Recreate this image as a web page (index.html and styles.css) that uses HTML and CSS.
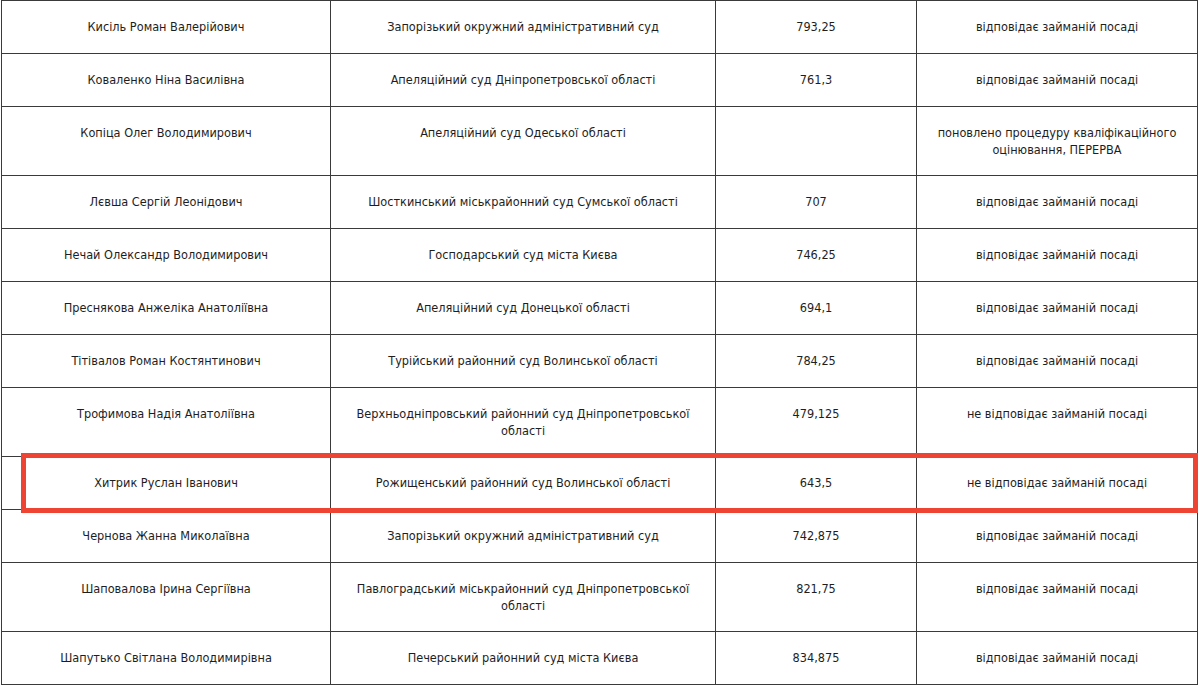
FILE: index.html
```html
<!DOCTYPE html>
<html lang="uk">
<head>
<meta charset="utf-8">
<title>Результати</title>
<link rel="stylesheet" href="styles.css">
</head>
<body>
<div class="wrap">
<table class="grid">
<colgroup>
<col class="c1"><col class="c2"><col class="c3"><col class="c4">
</colgroup>
<tbody>
<tr class="r1"><td>Кисіль Роман Валерійович</td><td>Запорізький окружний адміністративний суд</td><td>793,25</td><td>відповідає займаній посаді</td></tr>
<tr class="r1"><td>Коваленко Ніна Василівна</td><td>Апеляційний суд Дніпропетровської області</td><td>761,3</td><td>відповідає займаній посаді</td></tr>
<tr class="r2"><td>Копіца Олег Володимирович</td><td>Апеляційний суд Одеської області</td><td></td><td>поновлено процедуру кваліфікаційного оцінювання, ПЕРЕРВА</td></tr>
<tr class="r1"><td>Лєвша Сергій Леонідович</td><td>Шосткинський міськрайонний суд Сумської області</td><td>707</td><td>відповідає займаній посаді</td></tr>
<tr class="r1"><td>Нечай Олександр Володимирович</td><td>Господарський суд міста Києва</td><td>746,25</td><td>відповідає займаній посаді</td></tr>
<tr class="r1"><td>Преснякова Анжеліка Анатоліївна</td><td>Апеляційний суд Донецької області</td><td>694,1</td><td>відповідає займаній посаді</td></tr>
<tr class="r1"><td>Тітівалов Роман Костянтинович</td><td>Турійський районний суд Волинської області</td><td>784,25</td><td>відповідає займаній посаді</td></tr>
<tr class="r2"><td>Трофимова Надія Анатоліївна</td><td>Верхньодніпровський районний суд Дніпропетровської області</td><td>479,125</td><td>не відповідає займаній посаді</td></tr>
<tr class="r1"><td>Хитрик Руслан Іванович</td><td>Рожищенський районний суд Волинської області</td><td>643,5</td><td>не відповідає займаній посаді</td></tr>
<tr class="r1"><td>Чернова Жанна Миколаївна</td><td>Запорізький окружний адміністративний суд</td><td>742,875</td><td>відповідає займаній посаді</td></tr>
<tr class="r2"><td>Шаповалова Ірина Сергіївна</td><td>Павлоградський міськрайонний суд Дніпропетровської області</td><td>821,75</td><td>відповідає займаній посаді</td></tr>
<tr class="r1"><td>Шапутько Світлана Володимирівна</td><td>Печерський районний суд міста Києва</td><td>834,875</td><td>відповідає займаній посаді</td></tr>
</tbody>
</table>
<div class="highlight"></div>
</div>
</body>
</html>
```
FILE: styles.css
```css
html, body {
  margin: 0;
  padding: 0;
  background: #ffffff;
}
body {
  font-family: "DejaVu Sans Condensed", "DejaVu Sans", sans-serif;
  font-size: 12.6px;
  color: #1e1e1e;
}
.wrap {
  position: relative;
  padding-left: 1px;
  width: 1197px;
}
.grid {
  border-collapse: collapse;
  table-layout: fixed;
  width: 1196px;
}
.c1 { width: 329px; }
.c2 { width: 385px; }
.c3 { width: 201px; }
.c4 { width: 281px; }
.grid td {
  border: 1px solid #3a3a3a;
  text-align: center;
  vertical-align: top;
  padding: 17px 14px 0;
  line-height: 17px;
}
.r1 { height: 53px; }
.r2 { height: 69px; }
.highlight {
  position: absolute;
  left: 21px;
  top: 453px;
  width: 1167px;
  height: 50px;
  border: 5px solid #ee4433;
  pointer-events: none;
}
```
